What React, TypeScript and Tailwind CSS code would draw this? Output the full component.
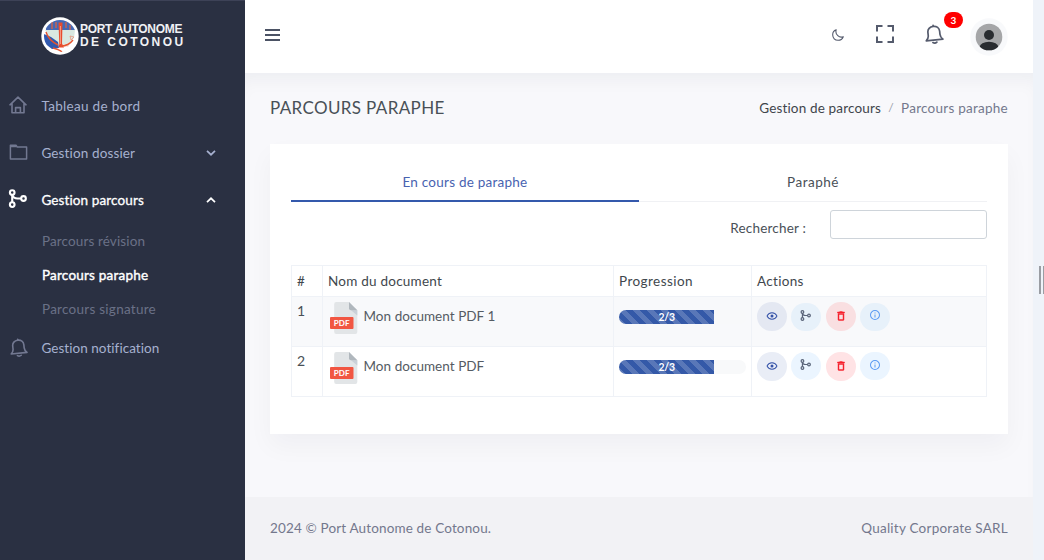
import type { ReactNode } from "react";

type IconProps = { className?: string };

function HomeIcon({ className }: IconProps) {
  return (
    <svg viewBox="0 0 18 18" className={className} fill="none" stroke="currentColor" strokeWidth="1.600" strokeLinejoin="round" strokeLinecap="round">
      <path d="M1 8.800 9 1.200l8 7.600M3 7.200v9.600h12V7.200M6.600 16.600v-5h4.800v5" />
    </svg>
  );
}

function FolderIcon({ className }: IconProps) {
  return (
    <svg viewBox="0 0 18 16" className={className} fill="none" stroke="currentColor" strokeWidth="1.500" strokeLinejoin="round">
      <path d="M.9 14.900V1.200h5.600l1.300 1.900h9.300v11.800z" />
      <path d="M1 2.500h6" />
    </svg>
  );
}

function MergeIcon({ className }: IconProps) {
  return (
    <svg viewBox="0 0 18 18" className={className} fill="none" stroke="currentColor" strokeWidth="2">
      <circle cx="4" cy="3.400" r="2.200" />
      <circle cx="4" cy="14.800" r="2.200" />
      <circle cx="14.700" cy="9" r="2.200" />
      <path d="M4 5.500v7.200M4 5.500c.6 2.400 2.400 3.500 5 3.500h3.600" />
    </svg>
  );
}

function BellIcon({ className }: IconProps) {
  return (
    <svg viewBox="0 0 20 20" className={className} fill="none" stroke="currentColor" strokeWidth="1.700" strokeLinejoin="round" strokeLinecap="round">
      <g transform="rotate(-6 10 10)">
        <path d="M1.600 16c1.800-1.500 2.500-3 2.500-5V7.800C4.100 4.600 6.500 2.300 10 2.300s5.900 2.300 5.900 5.500V11c0 2 .7 3.500 2.500 5zM10 2.200V1.300" />
        <path d="M8 18.400c1.200.9 2.800.9 4 0" />
      </g>
    </svg>
  );
}

function Logo() {
  return (
    <svg viewBox="0 0 38 38" className="size-[38px] shrink-0">
      <defs>
        <clipPath id="disc"><circle cx="19" cy="19" r="16" /></clipPath>
      </defs>
      <circle cx="19" cy="19" r="18.700" fill="#fff" />
      <g clipPath="url(#disc)">
        <rect width="38" height="38" fill="#fff" />
        <path d="M3 3h32v10H5z" fill="#4568b4" />
        <path d="M4 13h30l-1 8-6 6-9 1-8-4z" fill="#d9e8e0" />
        <path d="M3 17l7 3 7 5 1 6-7 1-8-6z" fill="#3159ae" />
        <path d="M21 29l10-5-4 6z" fill="#f8dfd4" />
        <path d="M11 5v7M15 5v6M25 5v6M29 8v5" stroke="#e4633c" strokeWidth="1.200" />
        <path d="M12 31c4 1 7 2 9 4" stroke="#e4542f" strokeWidth="1.300" fill="none" />
      </g>
      <path d="M17.500 5.500h4l-.5 21 2 4h-6l1.300-3z" fill="#e84b2c" />
      <path d="M19.400 9v18" stroke="#f7b7a3" strokeWidth=".8" />
      <path d="M5 15c2 7 6 10 12 13M20 29c5 0 9-2 12-6" stroke="#e4542f" strokeWidth="1.400" fill="none" />
      <path d="M29 19l4 1-3 3z" stroke="#e98a6f" strokeWidth=".7" fill="none" />
    </svg>
  );
}

function PdfIcon() {
  return (
    <svg viewBox="0 0 28 32" className="h-8 w-7 shrink-0">
      <path d="M6.200 0H19l8.300 8.300V30a2 2 0 0 1-2 2H6.200a2 2 0 0 1-2-2V2a2 2 0 0 1 2-2z" fill="#e2e5e7" />
      <path d="M21 8.300h6.300v5.300z" fill="#cad1d8" />
      <path d="M19 0l8.300 8.300H21a2 2 0 0 1-2-2z" fill="#b0b7bd" />
      <rect y="15" width="23.500" height="12" rx="1" fill="#f15642" />
      <text x="11.700" y="23.900" textAnchor="middle" fill="#fff" fontFamily="Lato, sans-serif" fontSize="8" fontWeight="700" letterSpacing=".1">PDF</text>
    </svg>
  );
}

function EyeIcon({ className }: IconProps) {
  return (
    <svg viewBox="0 0 24 24" className={className} fill="currentColor">
      <path d="M12 9a3 3 0 0 1 3 3 3 3 0 0 1-3 3 3 3 0 0 1-3-3 3 3 0 0 1 3-3m0-4.500c5 0 9.270 3.110 11 7.500-1.730 4.390-6 7.500-11 7.500S2.730 16.390 1 12c1.730-4.390 6-7.500 11-7.500M3.180 12a9.821 9.821 0 0 0 17.640 0 9.821 9.821 0 0 0-17.640 0z" />
    </svg>
  );
}

function TrashIcon({ className }: IconProps) {
  return (
    <svg viewBox="0 0 24 24" className={className} fill="currentColor">
      <path d="M6 19a2 2 0 0 0 2 2h8a2 2 0 0 0 2-2V7H6v12M8 9h8v10H8V9m7.500-5-1-1h-5l-1 1H5v2h14V4h-3.500z" stroke="currentColor" strokeWidth=".9" />
    </svg>
  );
}

function InfoIcon({ className }: IconProps) {
  return (
    <svg viewBox="0 0 24 24" className={className} fill="currentColor">
      <path d="M11 9h2V7h-2m1 13c-4.410 0-8-3.590-8-8s3.590-8 8-8 8 3.590 8 8-3.590 8-8 8m0-18A10 10 0 0 0 2 12a10 10 0 0 0 10 10 10 10 0 0 0 10-10A10 10 0 0 0 12 2m-1 15h2v-6h-2v6z" />
    </svg>
  );
}

function Chevron({ up }: { up?: boolean }) {
  return (
    <svg viewBox="0 0 10 6" className="mr-[29px] ml-auto h-[6px] w-[10px]" fill="none" stroke="currentColor" strokeWidth="1.700">
      <path d={up ? "M1 5.200 5 1.300 9 5.200" : "M1 .8 5 4.700 9 .8"} />
    </svg>
  );
}

function NavItem({ icon, label, className, children }: { icon: ReactNode; label: string; className: string; children?: ReactNode }) {
  return (
    <a className={`flex h-[47px] items-center pl-[9px] ${className}`}>
      <span className="flex w-[32.400px] items-center">{icon}</span>
      <span>{label}</span>
      {children}
    </a>
  );
}

function Sidebar() {
  return (
    <aside className="flex h-[560px] w-[245px] shrink-0 flex-col border-t border-[#3d4257] bg-[#2a3042]">
      <div className="flex h-[81px] shrink-0 items-start pt-4 pl-[41px]">
        <Logo />
        <div className="pt-[6px] pl-[1px] font-['Liberation_Sans'] text-[12px] leading-[13px] font-bold whitespace-nowrap text-[#f0f1f4]">
          <div className="tracking-[-0.300px]">PORT AUTONOME</div>
          <div className="tracking-[2.450px]">DE COTONOU</div>
        </div>
      </div>
      <nav className="text-[#a6b0cf]">
        <NavItem className="tracking-[0.310px]" label="Tableau de bord" icon={<HomeIcon className="mb-px size-[18px] text-[#727891]" />} />
        <NavItem className="tracking-[0.140px]" label="Gestion dossier" icon={<FolderIcon className="mb-[2px] h-4 w-[19px] text-[#727891]" />}>
          <Chevron />
        </NavItem>
        <NavItem className="tracking-[0.120px] text-white [-webkit-text-stroke:0.300px_white]" label="Gestion parcours" icon={<MergeIcon className="mb-[2px] -ml-px size-[19px]" />}>
          <Chevron up />
        </NavItem>
        <div className="flex flex-col pt-px pl-[42px] text-[#6a7187]">
          <a className="flex h-[34px] items-center tracking-[0.120px]">Parcours révision</a>
          <a className="flex h-[34px] items-center tracking-[0.210px] text-white [-webkit-text-stroke:0.400px_white]">Parcours paraphe</a>
          <a className="flex h-[34px] items-center tracking-[0.260px]">Parcours signature</a>
        </div>
        <NavItem className="-mt-[2px] tracking-[0.050px]" label="Gestion notification" icon={<BellIcon className="size-[19px] text-[#727891]" />} />
      </nav>
    </aside>
  );
}

function Header() {
  return (
    <header className="flex h-[73px] shrink-0 items-start bg-white text-[#555b6d]">
      <div className="mt-[29px] ml-[20px] flex w-[15px] flex-col gap-[3px]">
        <span className="h-[2px] bg-[#4b5264]" />
        <span className="h-[2px] bg-[#4b5264]" />
        <span className="h-[2px] bg-[#4b5264]" />
      </div>
      <svg viewBox="0 0 12 12" className="mt-[29px] ml-[552px] size-[12px]" fill="none" stroke="currentColor" strokeWidth="1.100" strokeLinejoin="round">
        <path d="M4.200.8C1.900 1.600.6 3.600.7 6c.2 3 2.400 5.200 5.400 5.300 2.300 0 4.300-1.400 5.200-3.600-1.900.8-4 .4-5.500-1C4.200 5.200 3.500 3 4.200.8z" />
      </svg>
      <svg viewBox="0 0 18 18" className="mt-[25px] ml-[32px] size-[18px]" fill="none" stroke="currentColor" strokeWidth="2">
        <path d="M1 6.500V1h5.500M11.500 1H17v5.500M17 11.500V17h-5.500M6.500 17H1v-5.500" />
      </svg>
      <div className="relative mt-[24px] ml-[30px]">
        <BellIcon className="size-[20px]" />
        <span className="absolute -top-[12px] left-[20px] flex h-4 w-[19px] items-center justify-center rounded-full bg-[#f00] text-[10px] font-bold text-white">3</span>
      </div>
      <svg viewBox="0 0 38 38" className="mt-[18px] ml-[26px] size-[38px]">
        <defs><clipPath id="avatar"><circle cx="19" cy="19" r="13.300" /></clipPath></defs>
        <circle cx="19" cy="19" r="18.700" fill="#f8f9fb" />
        <g clipPath="url(#avatar)">
          <rect width="38" height="38" fill="#a5a6a8" />
          <circle cx="19" cy="17" r="5" fill="#292c30" />
          <ellipse cx="19" cy="29.300" rx="9.300" ry="5.600" fill="#292c30" />
        </g>
      </svg>
    </header>
  );
}

function ActionButtons({ striped }: { striped: boolean }) {
  const blue = striped ? "bg-[#e7f1fa]" : "bg-[#ebf5ff]";
  return (
    <div className="flex items-center gap-[4.400px]">
      <button className={`flex h-[29px] w-[30px] items-center justify-center rounded-full text-[#3452a8] ${striped ? "bg-[#e4e8f2]" : "bg-[#e9edf6]"}`}><EyeIcon className="mb-px size-[12px]" /></button>
      <button className={`flex h-[28px] w-[30px] items-center justify-center rounded-full text-[#596479] ${blue}`}><MergeIcon className="mr-px mb-[3px] size-[11px]" /></button>
      <button className={`flex h-[29px] w-[30px] items-center justify-center rounded-full text-[#f5222d] ${striped ? "bg-[#f9dfe1]" : "bg-[#ffe3e5]"}`}><TrashIcon className="mb-px size-[12px]" /></button>
      <button className={`flex h-[28px] w-[30px] items-center justify-center rounded-full text-[#5b9bf3] ${blue}`}><InfoIcon className="mr-px mb-[3px] size-[12px]" /></button>
    </div>
  );
}

const documents = [
  { id: 1, name: "Mon document PDF 1", done: 2, total: 3, width: 75 },
  { id: 2, name: "Mon document PDF", done: 2, total: 3, width: 75 },
];

function DocumentTable() {
  return (
    <table className="mt-[26px] w-[695px] table-fixed border-collapse text-left text-[#495057] [&_td]:border [&_td]:border-[#eff2f7] [&_th]:border [&_th]:border-[#eff2f7]">
      <colgroup>
        <col className="w-[31px]" />
        <col className="w-[291px]" />
        <col className="w-[138px]" />
        <col className="w-[235px]" />
      </colgroup>
      <thead>
        <tr className="h-[31px] text-[#41474d] [&>th]:pb-px [&>th]:pl-[5px] [&>th]:font-normal">
          <th>#</th>
          <th className="tracking-[0.230px]">Nom du document</th>
          <th className="tracking-[0.440px]">Progression</th>
          <th className="tracking-[0.320px]">Actions</th>
        </tr>
      </thead>
      <tbody>
        {documents.map((doc, i) => (
          <tr key={doc.id} className={`align-top ${i === 0 ? "h-[49.500px] bg-[#f8f9fb]" : "h-[50px]"}`}>
            <td className="pt-[4px] pl-[5px] text-[14px]">{doc.id}</td>
            <td className="pt-[5px] pl-[7px]">
              <div className="flex items-center gap-[5.500px]">
                <PdfIcon />
                <span className="mb-[4px] tracking-[0.040px] text-[#555b63]">{doc.name}</span>
              </div>
            </td>
            <td className="pt-[13px] pl-[5px]">
              <div className="h-[14px] w-[127px] overflow-hidden rounded-full bg-[#f8f9fa]">
                <div
                  className="flex h-full items-center justify-center bg-[#3459a8] bg-[linear-gradient(45deg,rgba(255,255,255,.18)_25%,transparent_25%,transparent_50%,rgba(255,255,255,.18)_50%,rgba(255,255,255,.18)_75%,transparent_75%,transparent)] bg-[length:14px_14px] text-[10.500px] font-bold tracking-[-0.300px] text-white"
                  style={{ width: `${doc.width}%` }}
                >
                  {doc.done}/{doc.total}
                </div>
              </div>
            </td>
            <td className="pt-[5px] pl-[5px]"><ActionButtons striped={i === 0} /></td>
          </tr>
        ))}
      </tbody>
    </table>
  );
}

function Content() {
  return (
    <main className="h-[424px] shrink-0 overflow-hidden bg-[#f8f8fb] px-[25px] shadow-[inset_0_14px_18px_-8px_rgba(18,38,63,0.050)]">
      <div className="flex h-[71px] items-center justify-between pb-[2px]">
        <h1 className="text-[17px] tracking-[0.360px] text-[#495057]">PARCOURS PARAPHE</h1>
        <div className="flex items-center">
          <span className="tracking-[0.160px] text-[#3f454b]">Gestion de parcours</span>
          <span className="w-5 text-center text-[12px] text-[#9a9eaa]">/</span>
          <span className="tracking-[0.250px] text-[#74788d]">Parcours paraphe</span>
        </div>
      </div>
      <section className="h-[290px] w-[738px] bg-white px-[21px] pt-5 shadow-[0_12px_24px_rgba(18,38,63,0.040)]">
        <div className="flex h-[38px] w-[696px]">
          <a className="flex h-full w-1/2 items-center justify-center border-b-2 border-[#3459ac] tracking-[0.240px] text-[#4862b0]">En cours de paraphe</a>
          <a className="flex h-full w-1/2 items-center justify-center border-b border-[#f0f1f4] pb-px tracking-[0.520px] text-[#495057]">Paraphé</a>
        </div>
        <div className="mt-2 flex w-[696px] items-start justify-end">
          <label className="pt-[8px] pr-[24px] tracking-[0.190px] text-[#495057]">Rechercher :</label>
          <input className="h-[29px] w-[157px] rounded-[3px] border border-[#ced4da] bg-white" />
        </div>
        <DocumentTable />
      </section>
    </main>
  );
}

export default function App() {
  return (
    <div className="flex h-[560px] w-[1044px] overflow-hidden bg-white font-['Lato',sans-serif] text-[13.500px] leading-5 whitespace-nowrap">
      <Sidebar />
      <div className="flex w-[788px] shrink-0 flex-col">
        <Header />
        <Content />
        <footer className="flex flex-1 items-center justify-between bg-[#f2f2f5] px-[25px] pb-[2px] text-[#74788d]">
          <span className="tracking-[0.150px]">2024 © Port Autonome de Cotonou.</span>
          <span className="tracking-[0.240px]">Quality Corporate SARL</span>
        </footer>
      </div>
      <div className="flex w-[11px] items-start justify-end gap-[2px] bg-[#eff3f9] pt-[266px]">
        <span className="h-[28px] w-[2px] bg-[#9a9da3]" />
        <span className="h-[28px] w-px bg-[#9a9da3]" />
      </div>
    </div>
  );
}
